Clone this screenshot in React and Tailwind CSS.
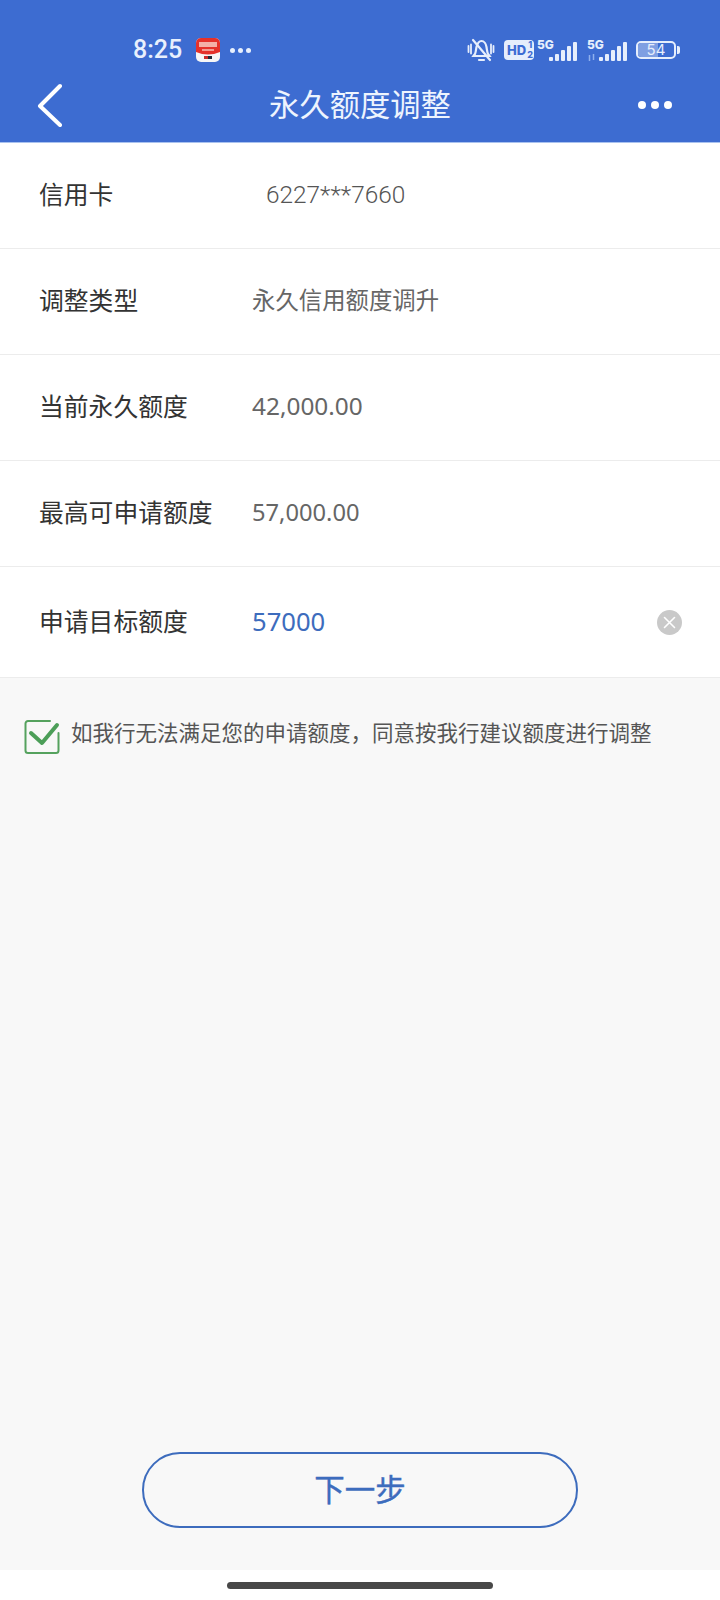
const font = { fontFamily: '"Noto Sans CJK SC", "Noto Sans", sans-serif' };
const roboto = { fontFamily: '"Roboto", sans-serif' };
const noto = { fontFamily: '"Noto Sans", sans-serif' };

function Signal() {
  const hs = [4, 7, 11, 15, 19];
  return (
    <div className="flex items-end gap-[2px] h-[19px]">
      {hs.map((h, i) => (
        <div key={i} className="w-[4px] bg-[#e6eefc] rounded-[1px]" style={{ height: h }} />
      ))}
    </div>
  );
}

function StatusBar() {
  return (
    <div className="h-[66px] pt-[38px] pl-[133px] pr-[40px] flex items-start justify-between">
      <div className="flex items-center h-[24px]">
        <span className="text-[25px] leading-[24px] text-[#e8f0fd] font-medium w-[52px]" style={roboto}>8:25</span>
        <svg width="24" height="24" viewBox="0 0 24 24" className="ml-[11px]">
          <rect width="24" height="24" rx="5" fill="#f6f6f6" />
          <path d="M0 5a5 5 0 0 1 5-5h14a5 5 0 0 1 5 5V14Q12 19 0 14Z" fill="#e5312a" />
          <rect x="3" y="4" width="18" height="5" fill="#f7c7bd" opacity="0.85" />
          <rect x="6" y="11" width="12" height="2" fill="#f7c7bd" opacity="0.7" />
          <rect x="8" y="18" width="4" height="3" fill="#c92a2a" />
          <rect x="12" y="18" width="4" height="3" fill="#1f2937" />
        </svg>
        <div className="flex gap-[3px] ml-[10px]">
          <div className="size-[5px] rounded-full bg-[#e8f0fd]" />
          <div className="size-[5px] rounded-full bg-[#e8f0fd]" />
          <div className="size-[5px] rounded-full bg-[#e8f0fd]" />
        </div>
      </div>
      <div className="flex items-start text-[#e6eefc]" style={{ fontFamily: '"Inter", sans-serif' }}>
        <svg width="28" height="24" viewBox="0 0 28 24" fill="none" stroke="#e6eefc" strokeWidth="2.200" strokeLinecap="round">
          <path d="M8 16c1-2 1-5 1.500-7C10.500 5 12 3 14.500 3S19 6 19.500 9c.5 3 .5 5 1.500 7l1.500 2H6.500Z" />
          <path d="M12 22h5" />
          <path d="M6 2l17 20" />
          <path d="M1.500 8v6M4 6.500v9M24 6.500v9M26.500 8v6" strokeWidth="1.800" />
        </svg>
        <div className="ml-[9px] mt-[2px] w-[30px] h-[20px] bg-[#e6eefc] rounded-[4px] flex items-center pl-[3px] text-[#3d6cd3] text-[13px] font-extrabold leading-none relative">
          HD
          <span className="absolute right-[1px] top-[0px] text-[9px] leading-[10px] text-center font-extrabold">1<br />2</span>
        </div>
        <div className="ml-[3px] w-[40px] relative h-[21px] mt-[2px]">
          <span className="absolute left-0 -top-[2px] text-[12px] font-extrabold leading-[14px]">5G</span>
          <div className="absolute right-0 bottom-0"><Signal /></div>
        </div>
        <div className="ml-[10px] w-[40px] relative h-[21px] mt-[2px]">
          <span className="absolute left-0 -top-[2px] text-[12px] font-extrabold leading-[14px]">5G</span>
          <svg width="9" height="7" viewBox="0 0 9 7" className="absolute left-0 bottom-0" stroke="#8fb0ee" strokeWidth="1.500" fill="none">
            <path d="M2.500 7V1M6.500 0v6" />
          </svg>
          <div className="absolute right-0 bottom-0"><Signal /></div>
        </div>
        <div className="ml-[9px] mt-[3px] flex items-center">
          <div className="w-[40px] h-[18px] border-2 border-[#e6eefc] rounded-[5px] text-[15px] leading-[14px] flex items-center justify-center relative overflow-hidden">
            <div className="absolute left-0 top-0 bottom-0 w-[20px] bg-[#7f9fe2]" />
            <span className="relative">54</span>
          </div>
          <div className="w-[3px] h-[8px] ml-[1px] bg-[#e6eefc] rounded-r-[2px]" />
        </div>
      </div>
    </div>
  );
}

function NavBar() {
  return (
    <div className="h-[77px] relative flex items-center justify-center pb-[3px] border-b border-[#a9c2ef]">
      <svg width="26" height="44" viewBox="0 0 26 44" fill="none" stroke="#ffffff" strokeWidth="4" strokeLinecap="round" strokeLinejoin="round" className="absolute left-[37px] top-[17px]">
        <path d="M23 3 3 23l20 19" />
      </svg>
      <span className="text-[30.300px] leading-[40px] text-[#eef4fe]">永久额度调整</span>
      <div className="absolute left-[638px] top-[35px] flex gap-[5px]">
        <div className="size-[8px] rounded-full bg-white" />
        <div className="size-[8px] rounded-full bg-white" />
        <div className="size-[8px] rounded-full bg-white" />
      </div>
    </div>
  );
}

function Row({ label, children }) {
  return (
    <div className="h-[106px] border-b border-[#ececec] bg-white flex items-center pl-[39px]">
      <span className="w-[213px] mb-[6px] text-[24.800px] leading-[34px] text-[#333333]">{label}</span>
      {children}
    </div>
  );
}

export default function App() {
  return (
    <div className="w-[720px] h-[1600px] flex flex-col bg-white overflow-hidden" style={font}>
      <div className="bg-[#3d6cd1] h-[143px]">
        <StatusBar />
        <NavBar />
      </div>
      <div className="flex-1 bg-[#f8f8f8] flex flex-col">
        <Row label="信用卡">
          <span className="ml-[14px] mb-[2px] text-[24.400px] leading-[34px] text-[#555555] font-light" style={roboto}>6227***7660</span>
        </Row>
        <Row label="调整类型">
          <span className="mb-[6px] text-[23.400px] leading-[34px] text-[#666666]">永久信用额度调升</span>
        </Row>
        <Row label="当前永久额度">
          <span className="mb-[4px] text-[24.400px] leading-[34px] text-[#666666]" style={noto}>42,000.00</span>
        </Row>
        <Row label="最高可申请额度">
          <span className="mb-[4px] text-[23.700px] leading-[34px] text-[#666666]" style={noto}>57,000.00</span>
        </Row>
        <div className="h-[111px] border-b border-[#ececec] bg-white flex items-center pl-[39px] pr-[38px]">
          <span className="w-[213px] mb-[4px] text-[24.800px] leading-[34px] text-[#333333]">申请目标额度</span>
          <span className="flex-1 text-[25.600px] leading-[34px] text-[#3d6cbd]" style={noto}>57000</span>
          <div className="size-[25px] rounded-full bg-[#c9c9c9] flex items-center justify-center">
            <svg width="13" height="13" viewBox="0 0 13 13" stroke="#ffffff" strokeWidth="1.600" strokeLinecap="round"><path d="M1.500 1.500l10 10M11.500 1.500l-10 10" /></svg>
          </div>
        </div>
        <div className="flex items-start pl-[24px] pt-[41px]">
          <svg width="36" height="36" viewBox="0 0 36 36" fill="none" strokeLinecap="round" strokeLinejoin="round" className="shrink-0">
            <path d="M26 2H4a2.500 2.500 0 0 0-2.500 2.500v27A2.500 2.500 0 0 0 4 34h28a2.500 2.500 0 0 0 2.500-2.500V14" stroke="#55a25e" strokeWidth="2" />
            <path d="M7 14l11 10L33 6" stroke="#4c9e58" strokeWidth="4" />
          </svg>
          <span className="ml-[11px] -mt-[3px] text-[21.500px] leading-[32px] text-[#555555] whitespace-nowrap">如我行无法满足您的申请额度，同意按我行建议额度进行调整</span>
        </div>
        <div className="flex-1" />
        <div className="flex justify-center pb-[42px]">
          <div className="w-[436px] h-[76px] border-2 border-[#3d6cbd] rounded-[38px] flex items-center justify-center pb-[4px] text-[30.500px] leading-[40px] [-webkit-text-stroke:0.4px_#3d6cbd] text-[#3d6cbd]">下一步</div>
        </div>
      </div>
      <div className="h-[30px] bg-white flex justify-center pt-[12px]">
        <div className="w-[266px] h-[7px] rounded-full bg-[#484848]" />
      </div>
    </div>
  );
}
